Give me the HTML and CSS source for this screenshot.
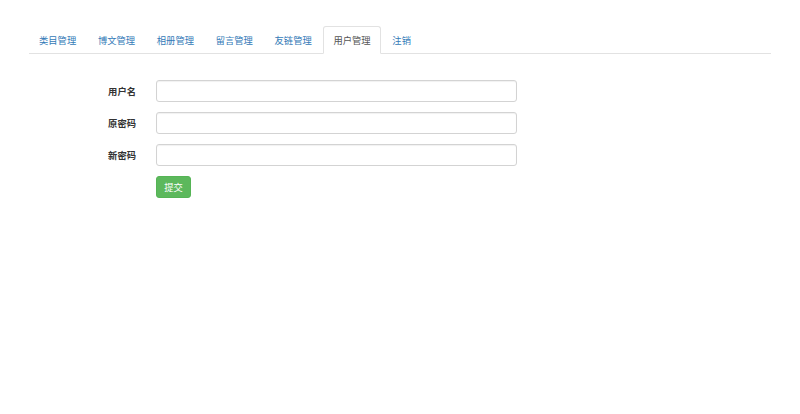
FILE: index.html
```html
<!DOCTYPE html>
<html lang="zh-CN">
<head>
<meta charset="utf-8">
<title>用户管理</title>
<link rel="stylesheet" href="styles.css">
</head>
<body>
<div class="page">
  <ul class="tabs">
    <li><a href="#">类目管理</a></li>
    <li><a href="#">博文管理</a></li>
    <li><a href="#">相册管理</a></li>
    <li><a href="#">留言管理</a></li>
    <li><a href="#">友链管理</a></li>
    <li class="active"><a href="#">用户管理</a></li>
    <li><a href="#">注销</a></li>
  </ul>
  <form class="form">
    <div class="row">
      <label class="label">用户名</label>
      <input class="input" type="text">
    </div>
    <div class="row">
      <label class="label">原密码</label>
      <input class="input" type="password">
    </div>
    <div class="row">
      <label class="label">新密码</label>
      <input class="input" type="password">
    </div>
    <div class="row">
      <span class="label"></span>
      <button class="btn" type="button">提交</button>
    </div>
  </form>
</div>
</body>
</html>
```
FILE: styles.css
```css
* { box-sizing: border-box; }
html, body { margin: 0; padding: 0; background: #fff; }
body {
  font-family: "Noto Sans CJK SC", "Liberation Sans", sans-serif;
  font-size: 9.3px;
  color: #333;
}
.page {
  padding: 26px 29px 0 29px;
}
.tabs {
  list-style: none;
  margin: 0;
  padding: 0;
  display: flex;
  border-bottom: 1px solid #e2e2e2;
}
.tabs li {
  margin-bottom: -1px;
  margin-right: 1.7px;
}
.tabs a {
  display: block;
  padding: 6.5px 9px;
  line-height: 13px;
  font-size: 9.3px;
  color: #337ab7;
  text-decoration: none;
  border: 1px solid transparent;
  border-radius: 3px 3px 0 0;
}
.tabs li.active a {
  color: #555;
  background: #fff;
  border-color: #e2e2e2;
  border-bottom-color: transparent;
}
.form {
  margin-top: 26px;
  display: flex;
  flex-direction: column;
  gap: 10px;
}
.row {
  display: flex;
  align-items: center;
  gap: 20px;
}
.label {
  width: 107px;
  text-align: right;
  font-weight: bold;
  font-size: 9.3px;
  color: #333;
}
.input {
  width: 361px;
  height: 22px;
  margin: 0;
  padding: 4px 8px;
  border: 1px solid #d3d3d3;
  border-radius: 3px;
  box-shadow: inset 0 1px 1px rgba(0,0,0,.06);
  font-size: 9.3px;
  background: #fff;
}
.btn {
  width: 35px;
  height: 22px;
  margin: 0;
  padding: 0;
  border: 1px solid #55b455;
  border-radius: 3px;
  background: #5cb85c;
  color: #fff;
  font-family: inherit;
  font-size: 9.3px;
}
```
